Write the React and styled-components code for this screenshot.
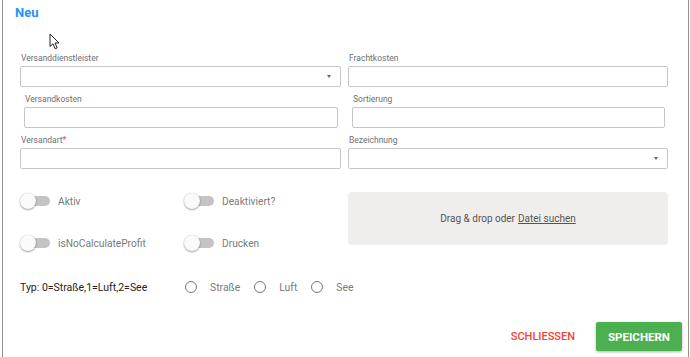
import React from "react";
import styled, { createGlobalStyle } from "styled-components";

const GlobalStyle = createGlobalStyle`
  html, body {
    margin: 0;
    padding: 0;
    background: #fff;
    font-family: Roboto, "Liberation Sans", Arial, sans-serif;
  }
`;

const Dialog = styled.div`
  position: relative;
  box-sizing: border-box;
  width: 687px;
  height: 357px;
  margin-left: 2px;
  border-left: 1px solid #8f8f8f;
  border-right: 1px solid #8f8f8f;
  padding: 5px 21px 0 17px;
  display: flex;
  flex-direction: column;
`;

const Title = styled.h2`
  margin: 0 0 0 -5px;
  font-size: 13px;
  line-height: 16px;
  font-weight: 700;
  color: #2196f3;
`;

const Cursor = styled.svg`
  position: absolute;
  left: 46px;
  top: 33px;
`;

const FieldGrid = styled.div`
  margin-top: 31px;
  display: grid;
  grid-template-columns: 321px 320px;
  column-gap: 7px;
  row-gap: 6px;
`;

const Field = styled.div`
  display: flex;
  flex-direction: column;
  padding: 0 ${(p) => (p.$inset ? "3px 0 4px" : "0")};
`;

const Label = styled.label`
  font-size: 8.5px;
  line-height: 12px;
  color: #6f6f6f;
  margin-bottom: 2px;
  padding-left: 1px;
`;

const Req = styled.span`
  color: #e53935;
`;

const InputBox = styled.div`
  position: relative;
  box-sizing: border-box;
  height: 21px;
  border: 1px solid #c6c6c6;
  border-radius: 2px;
  background: #fff;
`;

const Caret = styled.span`
  position: absolute;
  right: 9px;
  top: 8px;
  width: 0;
  height: 0;
  border-left: 2.5px solid transparent;
  border-right: 2.5px solid transparent;
  border-top: 3px solid #666;
`;

const Lower = styled.div`
  margin-top: 22px;
  display: grid;
  grid-template-columns: 328px 320px;
`;

const ToggleGrid = styled.div`
  display: grid;
  grid-template-columns: 164px 160px;
  row-gap: 26px;
  padding-top: 2px;
`;

const ToggleItem = styled.div`
  display: flex;
  align-items: center;
  height: 16px;
  gap: 8px;
`;

const Switch = styled.span`
  position: relative;
  width: 30px;
  height: 16px;
  flex-shrink: 0;

  &::before {
    content: "";
    position: absolute;
    left: 6px;
    top: 3px;
    width: 24px;
    height: 10px;
    border-radius: 5px;
    background: #c4c4c4;
  }

  &::after {
    content: "";
    position: absolute;
    left: 0;
    top: 0;
    width: 16px;
    height: 16px;
    border-radius: 50%;
    background: #fafafa;
    box-shadow: 0 1px 2px rgba(0, 0, 0, 0.35), 0 0 1px rgba(0, 0, 0, 0.2);
  }
`;

const ToggleLabel = styled.span`
  font-size: 10.2px;
  color: #7a7a7a;
`;

const DropZone = styled.div`
  height: 53px;
  background: #efeeed;
  border-radius: 4px;
  display: flex;
  align-items: center;
  justify-content: center;
  font-size: 10px;
  color: #555;
  margin-top: 1px;
`;

const DropLink = styled.span`
  text-decoration: underline;
  margin-left: 3px;
`;

const TypRow = styled.div`
  margin-top: 29px;
  display: flex;
  align-items: center;
  height: 14px;
`;

const TypLabel = styled.span`
  width: 165px;
  font-size: 10.5px;
  color: #222;
`;

const RadioItem = styled.span`
  display: flex;
  align-items: center;
  margin-right: 14px;
`;

const RadioCircle = styled.span`
  box-sizing: border-box;
  width: 12px;
  height: 12px;
  border: 1.3px solid #777;
  border-radius: 50%;
  margin-right: 13px;
`;

const RadioLabel = styled.span`
  font-size: 10.4px;
  color: #7a7a7a;
`;

const Actions = styled.div`
  margin-top: auto;
  margin-bottom: 6px;
  margin-right: -15px;
  display: flex;
  justify-content: flex-end;
  align-items: center;
  gap: 21px;
`;

const TextButton = styled.button`
  border: none;
  background: none;
  padding: 0;
  font-family: inherit;
  font-size: 11px;
  font-weight: 500;
  color: #f44336;
`;

const PrimaryButton = styled.button`
  border: none;
  border-radius: 2px;
  background: #4caf50;
  color: #fff;
  font-family: inherit;
  font-size: 11.5px;
  font-weight: 700;
  width: 86px;
  height: 29px;
  box-shadow: 0 1px 3px rgba(0, 0, 0, 0.3);
`;

const fields = [
  { label: "Versanddienstleister", select: true },
  { label: "Frachtkosten" },
  { label: "Versandkosten", inset: true },
  { label: "Sortierung", inset: true },
  { label: "Versandart", required: true },
  { label: "Bezeichnung", select: true },
];

const toggles = ["Aktiv", "Deaktiviert?", "isNoCalculateProfit", "Drucken"];
const radios = ["Straße", "Luft", "See"];

export default function App() {
  return (
    <>
      <GlobalStyle />
      <Dialog>
        <Title>Neu</Title>
        <Cursor width="12" height="17" viewBox="0 0 12 17">
          <path d="M1 1 L1 13.5 L4 10.8 L6.2 15.8 L8.2 14.9 L6 10 L10 10 Z" fill="#fff" stroke="#222" strokeWidth="1" strokeLinejoin="round" />
        </Cursor>

        <FieldGrid>
          {fields.map((f) => (
            <Field key={f.label} $inset={f.inset}>
              <Label>
                {f.label}
                {f.required && <Req>*</Req>}
              </Label>
              <InputBox>{f.select && <Caret />}</InputBox>
            </Field>
          ))}
        </FieldGrid>

        <Lower>
          <ToggleGrid>
            {toggles.map((t) => (
              <ToggleItem key={t}>
                <Switch />
                <ToggleLabel>{t}</ToggleLabel>
              </ToggleItem>
            ))}
          </ToggleGrid>
          <DropZone>
            Drag &amp; drop oder<DropLink>Datei suchen</DropLink>
          </DropZone>
        </Lower>

        <TypRow>
          <TypLabel>Typ: 0=Straße,1=Luft,2=See</TypLabel>
          {radios.map((r) => (
            <RadioItem key={r}>
              <RadioCircle />
              <RadioLabel>{r}</RadioLabel>
            </RadioItem>
          ))}
        </TypRow>

        <Actions>
          <TextButton>SCHLIESSEN</TextButton>
          <PrimaryButton>SPEICHERN</PrimaryButton>
        </Actions>
      </Dialog>
    </>
  );
}
